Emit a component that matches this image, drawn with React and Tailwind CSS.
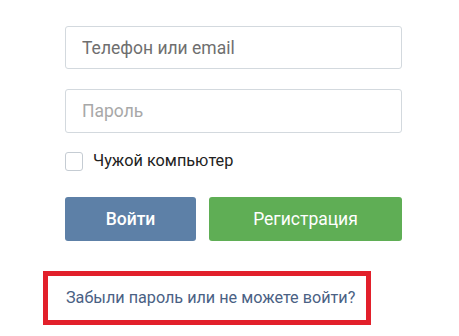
export default function App() {
  return (
    <div
      className="min-h-screen w-[459px] h-[336px] bg-white overflow-hidden"
      style={{ fontFamily: 'Roboto, "Open Sans", Arial, sans-serif' }}
    >
      <div className="flex flex-col pl-[65px] pt-[26px]">
        <input
          className="w-[337px] h-[43px] rounded-[3px] border border-[#d3d9de] px-[16px] text-[17.5px] text-[#6f6f6f] outline-none"
          defaultValue="Телефон или email"
        />
        <input
          className="mt-[20px] w-[337px] h-[44px] rounded-[3px] border border-[#d3d9de] px-[16px] text-[17.5px] placeholder:text-[#a8a8a8] outline-none"
          placeholder="Пароль"
        />

        <label className="mt-[19px] flex items-center gap-[10px] h-[19px]">
          <span className="w-[18px] h-[19px] rounded-[3px] border border-[#c5ccd3] bg-white" />
          <span className="text-[16.3px] text-[#222]">Чужой компьютер</span>
        </label>

        <div className="mt-[26px] flex gap-[13px]">
          <button className="w-[131px] h-[44px] rounded-[3px] bg-[#5d80a7] text-white text-[17.5px] font-medium">
            Войти
          </button>
          <button className="w-[193px] h-[44px] rounded-[3px] bg-[#5fae55] text-white text-[17.5px]">
            Регистрация
          </button>
        </div>

        <div className="mt-[30px] -ml-[22px] w-[328px] h-[54px] border-[5px] border-[#e2202b] flex items-center pl-[18px]">
          <a className="text-[16.2px] text-[#4a6184]">Забыли пароль или не можете войти?</a>
        </div>
      </div>
    </div>
  )
}
